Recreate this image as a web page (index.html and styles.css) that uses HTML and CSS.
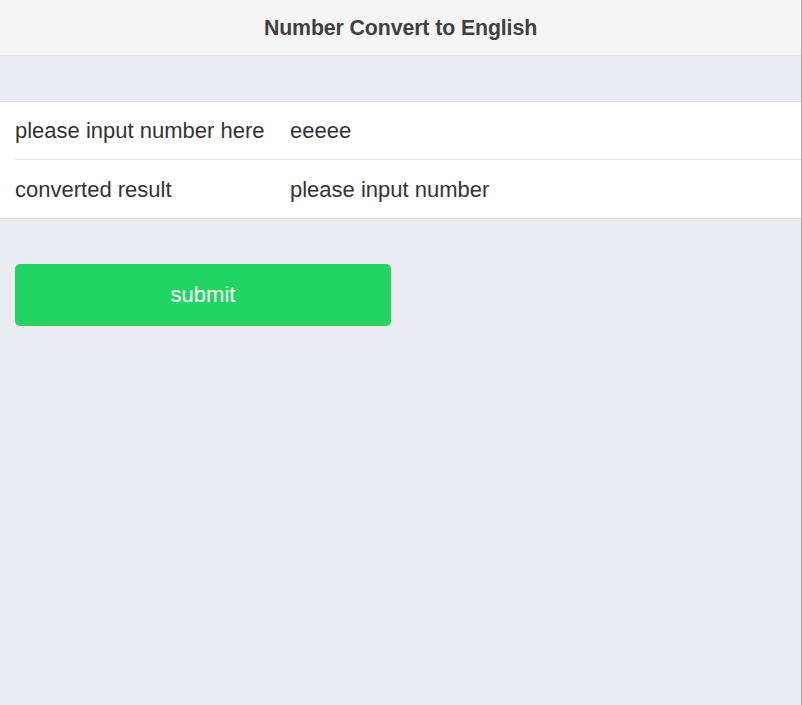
FILE: index.html
```html
<!DOCTYPE html>
<html>
<head>
<meta charset="utf-8">
<link rel="stylesheet" href="styles.css">
</head>
<body>
<div class="page">
  <header class="nav">Number Convert to English</header>
  <div class="cells">
    <div class="cell">
      <div class="label">please input number here</div>
      <div class="value">eeeee</div>
    </div>
    <div class="cell">
      <div class="label">converted result</div>
      <div class="value">please input number</div>
    </div>
  </div>
  <div class="actions">
    <button class="btn">submit</button>
  </div>
</div>
</body>
</html>
```
FILE: styles.css
```css
html, body {
  margin: 0;
  padding: 0;
  height: 100%;
}
body {
  background: #ebecf1;
  font-family: "Liberation Sans", Arial, sans-serif;
  color: #333;
}
.page {
  width: 801px;
  min-height: 705px;
  border-right: 1px solid #aaa;
  box-sizing: content-box;
}
.nav {
  height: 55px;
  line-height: 56px;
  background: #f5f5f5;
  border-bottom: 1px solid #e0e0e0;
  text-align: center;
  font-size: 21.3px;
  font-weight: bold;
  color: #404040;
  letter-spacing: -0.1px;
}
.cells {
  margin-top: 45px;
  background: #fff;
  border-top: 1px solid #e2e2e2;
  border-bottom: 1px solid #e2e2e2;
}
.cell {
  display: flex;
  align-items: center;
  height: 57px;
  margin-left: 15px;
  font-size: 22px;
  padding-top: 1px;
  box-sizing: border-box;
}
.cell + .cell {
  border-top: 1px solid #e2e2e2;
  height: 59px;
}
.label {
  width: 275px;
}
.value {
  flex: 1;
}
.actions {
  padding: 45px 15px 0;
}
.btn {
  display: block;
  width: 376px;
  height: 62px;
  border: 0;
  border-radius: 5px;
  background: #22d464;
  color: #fff;
  font-family: "Liberation Sans", Arial, sans-serif;
  font-size: 22px;
  padding: 0;
}
```
